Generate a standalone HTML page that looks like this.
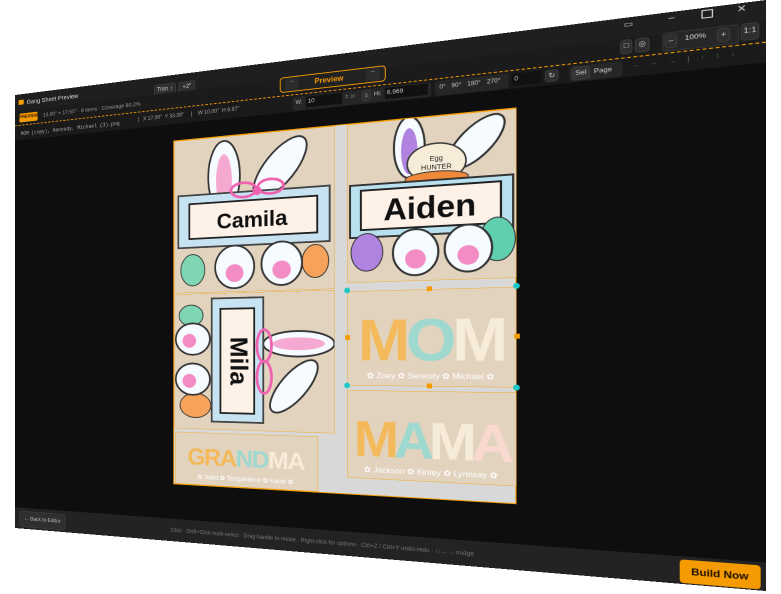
<!DOCTYPE html>
<html><head><meta charset="utf-8"><style>
html,body{margin:0;padding:0;background:#fff;width:781px;height:594px;overflow:hidden;font-family:"Liberation Sans",sans-serif}
#w{position:absolute;left:0;top:0;width:760px;height:540px;background:#1d1d1d;transform-origin:0 0;
transform:matrix3d(0.71871,-0.125,0,-0.00035176, 0,0.80185,0,0, 0,0,1,0, 15,95,0,1);overflow:hidden}
.a{position:absolute;white-space:nowrap}
.t{color:#bbb;font-size:7px}
.btn{position:absolute;background:#2e2e2e;border:1px solid #3a3a3a;border-radius:3px;color:#ccc;font-size:7px;text-align:center;box-sizing:border-box}
</style></head><body>
<div id="w">
 <div class="a" style="left:0;top:0;width:760px;height:20px;background:#1f1f1f"></div>
 <div class="a" style="left:5px;top:7px;width:7px;height:6px;background:#f5a000;border-radius:1px"></div>
 <div class="a t" style="left:16px;top:6px;color:#ddd;font-size:7.5px">Gang Sheet Preview</div>
 <div class="btn" style="left:180px;top:9px;width:26px;height:14px;line-height:12px">Trim ↑</div>
 <div class="btn" style="left:209px;top:9px;width:20px;height:14px;line-height:12px">+2"</div>
 <div class="a" style="left:649px;top:2px;color:#ddd;font-size:8px">▭</div>
 <div class="a" style="left:685px;top:0px;color:#ccc;font-size:9px">–</div>
 <div class="a" style="left:711px;top:2px;width:7px;height:6px;border:1px solid #ccc"></div>
 <div class="a" style="left:738px;top:0px;color:#ccc;font-size:9px">✕</div>
 <div class="a" style="left:0;top:20px;width:760px;height:19px;background:#1b1b1b"></div>
 <div class="a" style="left:6px;top:24px;width:25px;height:11px;background:#f59a00;border-radius:2px;color:#3a2000;font-size:5.5px;line-height:11px;text-align:center;font-weight:bold">PREVIEW</div>
 <div class="a t" style="left:38px;top:26px;font-size:6.5px;color:#999">13.00" × 17.50" · 6 items · Coverage 80.2%</div>
 <div class="a" style="left:324px;top:18px;width:110px;height:17px;border:1.5px solid #f59a00;border-radius:4px;background:#222;box-sizing:border-box"></div>
 <div class="a" style="left:330px;top:20px;width:14px;height:13px;background:#2c2c2c;color:#999;font-size:7px;text-align:center">–</div>
 <div class="a" style="left:414px;top:20px;width:14px;height:13px;background:#2c2c2c;color:#999;font-size:7px;text-align:center">–</div>
 <div class="a" style="left:361px;top:22px;color:#f59a00;font-size:8px;font-weight:bold">Preview</div>
 <div class="btn" style="left:646px;top:21px;width:10px;height:14px;line-height:12px">□</div>
 <div class="btn" style="left:658px;top:21px;width:12px;height:14px;line-height:12px">◎</div>
 <div class="a" style="left:680px;top:19px;width:58px;height:16px;background:#262626;border:1px solid #333;border-radius:3px"></div>
 <div class="btn" style="left:682px;top:21px;width:10px;height:13px;line-height:11px">–</div>
 <div class="a t" style="left:698px;top:23px;color:#ddd;font-size:6.5px">100%</div>
 <div class="btn" style="left:723px;top:21px;width:10px;height:13px;line-height:11px">+</div>
 <div class="btn" style="left:741px;top:19px;width:14px;height:16px;line-height:14px">1:1</div>
 <div class="a" style="left:0;top:38px;width:760px;height:0;border-top:1.5px dashed #f59a00"></div>
 <div class="a" style="left:0;top:40px;width:760px;height:17px;background:#1a1a1a"></div>
 <div class="a t" style="left:8px;top:46px;font-size:6px;color:#aaa;font-family:'Liberation Mono',monospace">MOM (copy), Kennedy, Michael (3).png</div>
 <div class="a t" style="left:160px;top:45px;font-size:6px;color:#aaa">|&nbsp;&nbsp; X 17.00" &nbsp;Y 33.39" &nbsp;&nbsp;&nbsp;&nbsp;|&nbsp;&nbsp;&nbsp; W 10.00" &nbsp;H 6.97"</div>
 <div class="a" style="left:338px;top:41px;width:140px;height:15px;background:#262626;border-radius:3px"></div>
 <div class="a t" style="left:341px;top:45px;font-size:6px">W:</div>
 <div class="a" style="left:352px;top:42px;width:36px;height:12px;background:#111;color:#ccc;font-size:6.5px;line-height:12px;padding-left:2px">10</div>
 <div class="a t" style="left:392px;top:44px;font-size:6px;color:#777">⇕ in</div>
 <div class="btn" style="left:410px;top:42px;width:9px;height:12px;line-height:11px;font-size:5px">▯</div>
 <div class="a t" style="left:422px;top:45px;font-size:6px">Ht:</div>
 <div class="a" style="left:433px;top:42px;width:40px;height:12px;background:#111;color:#ccc;font-size:6.5px;line-height:12px;padding-left:2px">6.969</div>
 <div class="a" style="left:482px;top:41px;width:68px;height:15px;background:#262626;border-radius:3px"></div>
 <div class="a t" style="left:486px;top:45px;font-size:6px;color:#ccc;word-spacing:4px">0° 90° 180° 270°</div>
 <div class="a" style="left:553px;top:42px;width:24px;height:12px;background:#111;color:#ccc;font-size:6px;line-height:12px;padding-left:2px">0</div>
 <div class="btn" style="left:582px;top:42px;width:12px;height:12px;line-height:11px">↻</div>
 <div class="a" style="left:603px;top:41px;width:45px;height:15px;background:#262626;border-radius:3px"></div>
 <div class="btn" style="left:605px;top:42px;width:16px;height:13px;line-height:11px;background:#333;font-size:6.5px">Sel</div>
 <div class="a t" style="left:624px;top:45px;font-size:6.5px;color:#ccc">Page</div>
 <div class="a t" style="left:656px;top:44px;font-size:6px;color:#666;word-spacing:7px">← ↔ → | ↑ ↕ ↓</div>
 <div class="a" style="left:0;top:57px;width:760px;height:457px;background:#0e0e0e"></div>
 <div class="a" style="left:203px;top:76px;width:354px;height:398px;background:#d8d8d8;border:1px solid #f59a00;box-sizing:border-box"></div>
 <svg class="a" style="left:204px;top:77px" width="178" height="176" viewBox="0 0 178 176">
  <rect width="178" height="176" fill="#e2d3bf" stroke="#f5a000" stroke-width="0.8"/>
  <ellipse cx="58" cy="45" rx="18" ry="40" fill="#f5fbff" stroke="#333" stroke-width="2"/>
  <ellipse cx="58" cy="50" rx="9" ry="30" fill="#f6a9d0"/>
  <ellipse cx="120" cy="40" rx="17" ry="40" transform="rotate(40 120 40)" fill="#f5fbff" stroke="#333" stroke-width="2"/>
  <rect x="5" y="64" width="168" height="60" fill="#c7e3f2" stroke="#444" stroke-width="2"/>
  <rect x="18" y="74" width="142" height="40" fill="#fdf1e8" stroke="#222" stroke-width="2"/>
  <ellipse cx="80" cy="62" rx="14" ry="8" fill="none" stroke="#ee62b0" stroke-width="3"/>
  <ellipse cx="110" cy="60" rx="14" ry="8" fill="none" stroke="#ee62b0" stroke-width="3"/>
  <circle cx="95" cy="64" r="5" fill="#ee62b0"/>
  <text x="89" y="104" text-anchor="middle" font-family="Liberation Sans" font-weight="bold" font-size="24" fill="#111">Camila</text>
  <ellipse cx="22" cy="150" rx="14" ry="18" fill="#7fd6b3" stroke="#333"/>
  <ellipse cx="158" cy="145" rx="14" ry="18" fill="#f6a25a" stroke="#333"/>
  <ellipse cx="70" cy="148" rx="22" ry="24" fill="#f5fbff" stroke="#333" stroke-width="2"/>
  <ellipse cx="70" cy="155" rx="10" ry="10" fill="#f38cc4"/>
  <ellipse cx="122" cy="146" rx="22" ry="24" fill="#f5fbff" stroke="#333" stroke-width="2"/>
  <ellipse cx="122" cy="153" rx="10" ry="10" fill="#f38cc4"/>
 </svg>
 <svg class="a" style="left:395px;top:77px" width="162" height="170" viewBox="0 0 162 170">
  <rect width="162" height="170" fill="#e2d3bf" stroke="#f5a000" stroke-width="0.8"/>
  <ellipse cx="62" cy="30" rx="15" ry="32" fill="#f5fbff" stroke="#333" stroke-width="2"/>
  <ellipse cx="62" cy="34" rx="8" ry="24" fill="#b183e0"/>
  <ellipse cx="125" cy="30" rx="15" ry="34" transform="rotate(45 125 30)" fill="#f5fbff" stroke="#333" stroke-width="2"/>
  <ellipse cx="88" cy="48" rx="28" ry="20" fill="#f6ecd8" stroke="#333" stroke-width="1.5"/>
  <ellipse cx="88" cy="64" rx="30" ry="7" fill="#f08a3a" stroke="#333"/>
  <text x="88" y="46" text-anchor="middle" font-size="7" font-family="Liberation Sans" fill="#222">Egg</text>
  <text x="88" y="55" text-anchor="middle" font-size="7" font-family="Liberation Sans" fill="#222">HUNTER</text>
  <rect x="3" y="66" width="156" height="56" fill="#b9e0ee" stroke="#333" stroke-width="2"/>
  <rect x="14" y="72" width="134" height="42" fill="#fdf1e8" stroke="#222" stroke-width="2"/>
  <text x="81" y="105" text-anchor="middle" font-family="Liberation Sans" font-weight="bold" font-size="32" fill="#111">Aiden</text>
  <ellipse cx="20" cy="138" rx="16" ry="20" fill="#b183e0" stroke="#333"/>
  <ellipse cx="145" cy="130" rx="16" ry="22" fill="#5fcfae" stroke="#333"/>
  <ellipse cx="68" cy="140" rx="22" ry="24" fill="#f5fbff" stroke="#333" stroke-width="2"/>
  <ellipse cx="68" cy="147" rx="10" ry="10" fill="#f38cc4"/>
  <ellipse cx="118" cy="138" rx="22" ry="24" fill="#f5fbff" stroke="#333" stroke-width="2"/>
  <ellipse cx="118" cy="145" rx="10" ry="10" fill="#f38cc4"/>
 </svg>
 <svg class="a" style="left:204px;top:254px" width="178" height="155" viewBox="0 0 178 155">
  <rect width="178" height="155" fill="#e2d3bf" stroke="#f5a000" stroke-width="0.8"/>
  <ellipse cx="140" cy="58" rx="38" ry="14" fill="#f5fbff" stroke="#333" stroke-width="2"/>
  <ellipse cx="140" cy="58" rx="28" ry="7" fill="#f6a9d0"/>
  <ellipse cx="135" cy="105" rx="14" ry="36" transform="rotate(40 135 105)" fill="#f5fbff" stroke="#333" stroke-width="2"/>
  <ellipse cx="20" cy="25" rx="14" ry="12" fill="#7fd6b3" stroke="#333"/>
  <ellipse cx="25" cy="128" rx="18" ry="14" fill="#f6a25a" stroke="#333"/>
  <ellipse cx="22" cy="52" rx="20" ry="18" fill="#f5fbff" stroke="#333" stroke-width="2"/>
  <ellipse cx="22" cy="98" rx="20" ry="18" fill="#f5fbff" stroke="#333" stroke-width="2"/>
  <ellipse cx="18" cy="54" rx="8" ry="8" fill="#f38cc4"/>
  <ellipse cx="18" cy="100" rx="8" ry="8" fill="#f38cc4"/>
  <rect x="44" y="6" width="58" height="140" fill="#c7e3f2" stroke="#444" stroke-width="2"/>
  <rect x="54" y="18" width="38" height="118" fill="#fdf1e8" stroke="#222" stroke-width="2"/>
  <ellipse cx="103" cy="60" rx="8" ry="18" fill="none" stroke="#ee62b0" stroke-width="3"/>
  <ellipse cx="103" cy="95" rx="8" ry="18" fill="none" stroke="#ee62b0" stroke-width="3"/>
  <text x="73" y="77" transform="rotate(90 73 77)" text-anchor="middle" dominant-baseline="middle" font-family="Liberation Sans" font-weight="bold" font-size="28" fill="#111">Mila</text>
 </svg>
 <svg class="a" style="left:205px;top:413px" width="160" height="60" viewBox="0 0 160 60">
  <rect width="160" height="60" fill="#e2d3bf" stroke="#f5a000" stroke-width="0.8"/>
  <text x="80" y="37" text-anchor="middle" font-family="Liberation Sans" font-weight="bold" font-size="27" letter-spacing="-1.5" fill="#f4b95a">GRA<tspan fill="#9fd8cf">ND</tspan><tspan fill="#f7ecd9">MA</tspan></text>
  <text x="80" y="53" text-anchor="middle" font-family="Liberation Sans" font-size="7" fill="#fff">✿ Juliet ✿ Temperance ✿ Kacie ✿</text>
 </svg>
 <svg class="a" style="left:395px;top:256px" width="162" height="101" viewBox="0 0 162 101">
  <rect width="162" height="101" fill="#e2d3bf" stroke="#f5a000" stroke-width="0.8"/>
  <text x="81" y="74" text-anchor="middle" font-family="Liberation Sans" font-weight="bold" font-size="62" letter-spacing="-4" fill="#f4b95a">M<tspan fill="#9fd8cf">O</tspan><tspan fill="#f7ecd9">M</tspan></text>
  <text x="81" y="93" text-anchor="middle" font-family="Liberation Sans" font-size="8.5" fill="#fff">✿ Zoey ✿ Serenity ✿ Michael ✿</text>
 </svg>
 <svg class="a" style="left:395px;top:362px" width="162" height="94" viewBox="0 0 162 94">
  <rect width="162" height="94" fill="#e2d3bf" stroke="#f5a000" stroke-width="0.8"/>
  <text x="81" y="70" text-anchor="middle" font-family="Liberation Sans" font-weight="bold" font-size="54" letter-spacing="-5" fill="#f4b95a">M<tspan fill="#9fd8cf">A</tspan><tspan fill="#f7ecd9">M</tspan><tspan fill="#f8d8cf">A</tspan></text>
  <text x="81" y="87" text-anchor="middle" font-family="Liberation Sans" font-size="8.5" fill="#fff">✿ Jackson ✿ Kinley ✿ Lynnsay ✿</text>
 </svg>
 <div class="a" style="left:392px;top:252px;width:6px;height:6px;border-radius:50%;background:#1cc7c7"></div>
 <div class="a" style="left:554px;top:252px;width:6px;height:6px;border-radius:50%;background:#1cc7c7"></div>
 <div class="a" style="left:392px;top:354px;width:6px;height:6px;border-radius:50%;background:#1cc7c7"></div>
 <div class="a" style="left:554px;top:354px;width:6px;height:6px;border-radius:50%;background:#1cc7c7"></div>
 <div class="a" style="left:474px;top:253px;width:5px;height:5px;background:#f59a00"></div>
 <div class="a" style="left:474px;top:354px;width:5px;height:5px;background:#f59a00"></div>
 <div class="a" style="left:393px;top:303px;width:5px;height:5px;background:#f59a00"></div>
 <div class="a" style="left:555px;top:303px;width:5px;height:5px;background:#f59a00"></div>
 <div class="a" style="left:0;top:514px;width:760px;height:26px;background:#232323"></div>
 <div class="btn" style="left:6px;top:518px;width:62px;height:20px;line-height:18px;background:#2f2f2f;font-size:6.5px;color:#bbb">← Back to Editor</div>
 <div class="a t" style="left:200px;top:525px;font-size:6px;color:#777">Click · Shift+Click multi-select · Drag handle to resize · Right-click for options · Ctrl+Z / Ctrl+Y undo-redo · ↑↓←→ nudge</div>
 <div class="a" style="left:694px;top:517px;width:62px;height:22px;background:#f59a00;border-radius:3px;color:#1a1000;font-size:9px;font-weight:bold;line-height:22px;text-align:center">Build Now</div>
</div>
</body></html>
